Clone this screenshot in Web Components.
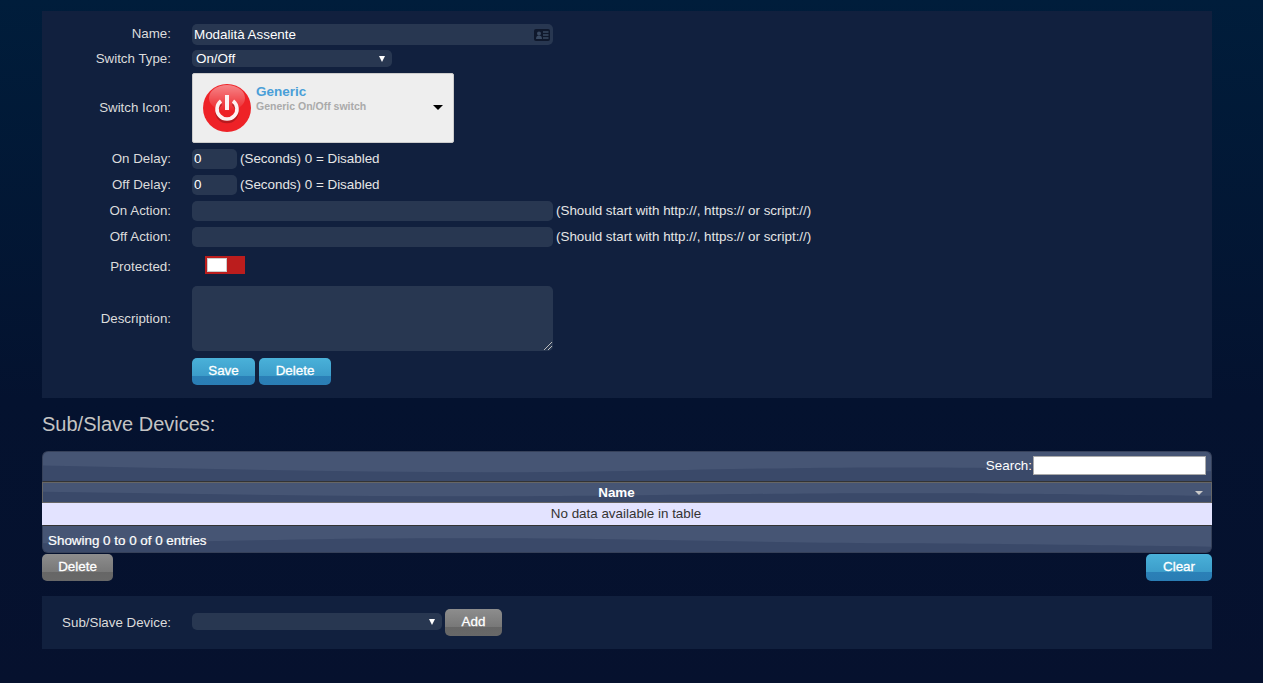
<!DOCTYPE html>
<html>
<head>
<meta charset="utf-8">
<title>Edit Device</title>
<style>
html, body { margin: 0; height: 683px; overflow: hidden; }
body {
    background: linear-gradient(#001d3b 0, #04122f 400px, #06112e 100%);
    font: 13.4px "Liberation Sans", Arial, sans-serif;
    color: #e0e0e0;
}
dz-page { width: 1170px; margin-left: 42px; padding-top: 11px; }
</style>
</head>
<body>
<template id="row-tpl">
    <style>
        :host { display: grid; grid-template-columns: 129px 1fr; column-gap: 21px; align-items: center; }
        label { text-align: right; color: #dcdcdc; font-size: 13.33px; margin-bottom: var(--lift, 0); }
        .field { display: flex; align-items: center; min-width: 0; font-size: 13.4px; color: #e6e6e6; }
        ::slotted(small) { font-size: 13.4px; margin-left: 3px; margin-bottom: var(--lift, 0); }
    </style>
    <label><slot name="label"></slot></label>
    <div class="field"><slot></slot></div>
</template>

<script>
const waveSvg = (path) => `url("data:image/svg+xml,${encodeURIComponent(`<svg xmlns='http://www.w3.org/2000/svg' preserveAspectRatio='none' viewBox='0 0 1170 30'><rect width='1170' height='30' fill='#3a4969'/><path d='${path}' fill='#465574'/></svg>`)}")`
const WAVE_TOP = waveSvg('M0 0H1170V20C1100 20 1000 16 850 16C700 16 600 21 450 21C300 21 150 17 0 14Z')
const WAVE_FOOT = waveSvg('M0 0H1170V24C1100 23 1000 21 850 20C700 19 600 14 400 14C250 14 150 19 0 20Z')

// Blocos de layout
class DzPage extends HTMLElement {
    constructor() {
        super()
        this.attachShadow({ mode: 'open' }).innerHTML = `
            <style>:host { display: block; }</style>
            <slot></slot>`
    }
}

class DzPanel extends HTMLElement {
    constructor() {
        super()
        this.attachShadow({ mode: 'open' }).innerHTML = `
            <style>
                :host { display: block; background: #11203e; box-sizing: border-box; }
            </style>
            <slot></slot>`
    }
}

class DzRow extends HTMLElement {
    constructor() {
        super()
        this.attachShadow({ mode: 'open' }).appendChild(document.getElementById('row-tpl').content.cloneNode(true))
    }
}

// Campos: w e h so existem depois do construtor
class DzInput extends HTMLElement {
    constructor() {
        super()
        this.attachShadow({ mode: 'open' }).innerHTML = `
            <style>
                :host { display: flex; align-items: center; justify-content: space-between; box-sizing: border-box;
                    padding: 0 2px 0 2px; background: #283751; border-radius: 5px;
                    color: #fff; font-size: 13.4px; flex: none; }
            </style>
            <span><slot></slot></span>
            <slot name="end"></slot>`
    }

    connectedCallback() {
        this.style.width = (this.getAttribute('w') || 361) + 'px'
        this.style.height = (this.getAttribute('h') || 20) + 'px'
    }
}

class DzSelect extends HTMLElement {
    constructor() {
        super()
        this.attachShadow({ mode: 'open' }).innerHTML = `
            <style>
                :host { display: flex; align-items: center; justify-content: space-between; box-sizing: border-box;
                    height: 17px; padding: 0 7px 0 4px; background: #283751; border-radius: 5px;
                    color: #fff; font-size: 13.4px; flex: none; }
                i { width: 0; height: 0; border: 3.5px solid transparent; border-top: 6px solid #fff; border-bottom: 0; }
            </style>
            <span><slot></slot></span><i></i>`
    }

    connectedCallback() {
        this.style.width = (this.getAttribute('w') || 200) + 'px'
    }
}

class DzButton extends HTMLElement {
    static get observedAttributes() { return ['variant', 'w'] }

    constructor() {
        super()
        this.attachShadow({ mode: 'open' })
        this.render()
    }

    attributeChangedCallback() { this.render() }

    render() {
        const variant = this.getAttribute('variant') || 'blue'
        const w = this.getAttribute('w') || 63
        const colors = variant === 'grey'
            ? 'linear-gradient(#8d8d8d, #787878 66%, #666 67%, #686868)'
            : 'linear-gradient(#4ab1d9, #3c9dca 66%, #2b80b7 67%, #2a7db4)'
        this.shadowRoot.innerHTML = `
            <style>
                :host { display: inline-flex; align-items: center; justify-content: center; box-sizing: border-box;
                    width: ${w}px; height: 27px; padding-bottom: 2px; border-radius: 5px; background: ${colors};
                    color: #fff; font: 13.4px "Liberation Sans", Arial, sans-serif; flex: none; -webkit-text-stroke: .3px #fff; }
            </style>
            <slot></slot>`
    }
}

class DzIconPicker extends HTMLElement {
    constructor() {
        super()
        this.attachShadow({ mode: 'open' }).innerHTML = `
            <style>
                :host { display: flex; box-sizing: border-box; width: 262px; height: 70px; background: #eee; border: 1px solid #ccc;
                    border-radius: 2px; padding: 10px 10px 0 10px; position: relative; flex: none; }
                svg { flex: none; display: block; }
                .txt { margin-left: 5px; }
                .title { color: #4a9fd8; font-weight: bold; font-size: 13.5px; line-height: 16px; }
                .sub { color: #aaa; font-weight: bold; font-size: 10.5px; line-height: 13px; }
                i { position: absolute; right: 10px; top: 31px; width: 0; height: 0; border: 5px solid transparent; border-top: 5px solid #000; border-bottom: 0; }
            </style>
            <svg width="48" height="48" viewBox="0 0 48 48">
                <defs>
                    <linearGradient id="gl" x1="0" y1="0" x2="0" y2="1">
                        <stop offset="0" stop-color="#fff" stop-opacity=".45"/>
                        <stop offset="1" stop-color="#fff" stop-opacity=".02"/>
                    </linearGradient>
                </defs>
                <circle cx="24" cy="24" r="24" fill="#ee2227"/>
                <ellipse cx="24" cy="14" rx="18" ry="13" fill="url(#gl)"/>
                <path d="M18 18A10 10 0 1 0 30 18" fill="none" stroke="#8e1418" stroke-opacity=".55" stroke-width="3.6" transform="translate(0 1.5)"/>
                <path d="M18 17A10 10 0 1 0 30 17" fill="none" stroke="#fdf3f3" stroke-width="3.6"/>
                <path d="M24 11V26" stroke="#fdf3f3" stroke-width="4" fill="none"/>
            </svg>
            <div class="txt">
                <div class="title"><slot name="title"></slot></div>
                <div class="sub"><slot name="sub"></slot></div>
            </div>
            <i></i>`
    }
}

class DzToggle extends HTMLElement {
    constructor() {
        super()
        this.attachShadow({ mode: 'open' }).innerHTML = `
            <style>
                :host { display: block; box-sizing: border-box; width: 40px; height: 18px; margin: 0 0 2px 13px; padding: 2px; background: #bb1d1d; flex: none; }
                b { display: block; box-sizing: border-box; width: 20px; height: 14px; background: #fff; border: 1px solid #ccc; }
            </style>
            <b></b>`
    }
}

class DzTable extends HTMLElement {
    constructor() {
        super()
        this.attachShadow({ mode: 'open' }).innerHTML = `
            <style>
                :host { display: block; color: #fff; font-size: 13.4px; }
                .top, .head { background: ${WAVE_TOP} 0 0 / 100% 100%; }
                .foot { background: ${WAVE_FOOT} 0 0 / 100% 100%; }
                .top { height: 31px; box-sizing: border-box; display: flex; align-items: center; justify-content: flex-end; padding: 0 5px 2px 0;
                    border: 1px solid #36415a; border-bottom: 1px solid #333; border-radius: 6px 6px 0 0; }
                .top input { width: 173px; height: 19px; box-sizing: border-box; margin: 0 0 0 1px; padding: 0; background: #fff; border: 1px solid #aaa; }
                .head { height: 21px; box-sizing: border-box; display: flex; align-items: center; justify-content: center; position: relative;
                    border: 1px solid #666; font-weight: bold; }
                .head span { margin-left: -21px; }
                .head i { position: absolute; right: 8px; top: 8px; width: 0; height: 0; border: 4px solid transparent; border-top: 4px solid #c8c8c8; border-bottom: 0; }
                .row { height: 22px; background: #e3e3ff; color: #333; text-align: center; line-height: 22px; }
                .row span { margin-left: -2px; }
                .foot { height: 28px; box-sizing: border-box; display: flex; align-items: center; padding: 3px 0 0 5px;
                    border: 1px solid #36415a; border-top: 1px solid #333; border-radius: 0 0 6px 6px; -webkit-text-stroke: .2px #fff; }
            </style>
            <div class="top">Search:<input type="text"></div>
            <div class="head"><span><slot name="col"></slot></span><i></i></div>
            <div class="row"><span><slot name="empty"></slot></span></div>
            <div class="foot"><slot name="info"></slot></div>`
    }
}

customElements.define('dz-page', DzPage)
customElements.define('dz-panel', DzPanel)
customElements.define('dz-row', DzRow)
customElements.define('dz-input', DzInput)
customElements.define('dz-select', DzSelect)
customElements.define('dz-button', DzButton)
customElements.define('dz-icon-picker', DzIconPicker)
customElements.define('dz-toggle', DzToggle)
customElements.define('dz-table', DzTable)
</script>

<dz-page>
    <dz-panel style="height:387px;padding-top:13px">
        <dz-row style="height:21px;--lift:2px"><span slot="label">Name:</span>
            <dz-input h="21">Modalità Assente
                <svg slot="end" style="margin-right:1px" width="16" height="12" viewBox="0 0 16 12"><rect width="16" height="12" rx="2" fill="#0f182c"/><circle cx="5" cy="4.5" r="2" fill="#3a4a62"/><path d="M2 10c0-2.5 1.2-3.5 3-3.5s3 1 3 3.5z" fill="#3a4a62"/><path d="M9 3h5.5M9 6h5.5M9 9h5.5" stroke="#3a4a62" stroke-width="1.3"/></svg>
            </dz-input>
        </dz-row>
        <dz-row style="height:17px;margin-top:5px"><span slot="label">Switch Type:</span><dz-select>On/Off</dz-select></dz-row>
        <dz-row style="height:70px;margin-top:6px;--lift:2px"><span slot="label">Switch Icon:</span>
            <dz-icon-picker><span slot="title">Generic</span><span slot="sub">Generic On/Off switch</span></dz-icon-picker>
        </dz-row>
        <dz-row style="height:20px;margin-top:6px;--lift:2px"><span slot="label">On Delay:</span><dz-input w="45" style="padding-bottom:2px">0</dz-input><small>(Seconds) 0 = Disabled</small></dz-row>
        <dz-row style="height:20px;margin-top:6px;--lift:2px"><span slot="label">Off Delay:</span><dz-input w="45" style="padding-bottom:2px">0</dz-input><small>(Seconds) 0 = Disabled</small></dz-row>
        <dz-row style="height:20px;margin-top:6px;--lift:2px"><span slot="label">On Action:</span><dz-input></dz-input><small>(Should start with http://, https:// or script://)</small></dz-row>
        <dz-row style="height:20px;margin-top:6px;--lift:2px"><span slot="label">Off Action:</span><dz-input></dz-input><small>(Should start with http://, https:// or script://)</small></dz-row>
        <dz-row style="height:20px;margin-top:9px"><span slot="label">Protected:</span><dz-toggle></dz-toggle></dz-row>
        <dz-row style="height:65px;margin-top:10px"><span slot="label">Description:</span>
            <dz-input h="65"><span></span>
                <svg slot="end" style="align-self:flex-end;margin:0 -1px 1px 0" width="8" height="8" viewBox="0 0 8 8"><path d="M0 8L8 0M4 8L8 4" stroke="#bbb" stroke-width="1"/></svg>
            </dz-input>
        </dz-row>
        <dz-row style="height:27px;margin-top:7px"><span slot="label"></span>
            <dz-button w="63">Save</dz-button><dz-button w="72" style="margin-left:4px">Delete</dz-button>
        </dz-row>
    </dz-panel>

    <div style="font-size:20px;color:#c4c4c4;line-height:24px;margin-top:14px">Sub/Slave Devices:</div>

    <dz-table style="margin-top:15px">
        <span slot="col">Name</span>
        <span slot="empty">No data available in table</span>
        <span slot="info">Showing 0 to 0 of 0 entries</span>
    </dz-table>

    <div style="display:flex;justify-content:space-between;margin-top:1px">
        <dz-button variant="grey" w="71">Delete</dz-button>
        <dz-button w="66">Clear</dz-button>
    </div>

    <dz-panel style="height:53px;margin-top:15px;padding-top:13px">
        <dz-row style="height:27px"><span slot="label">Sub/Slave Device:</span>
            <dz-select w="250" style="margin-bottom:2px"></dz-select><dz-button variant="grey" w="57" style="margin-left:3px">Add</dz-button>
        </dz-row>
    </dz-panel>
</dz-page>
</body>
</html>
